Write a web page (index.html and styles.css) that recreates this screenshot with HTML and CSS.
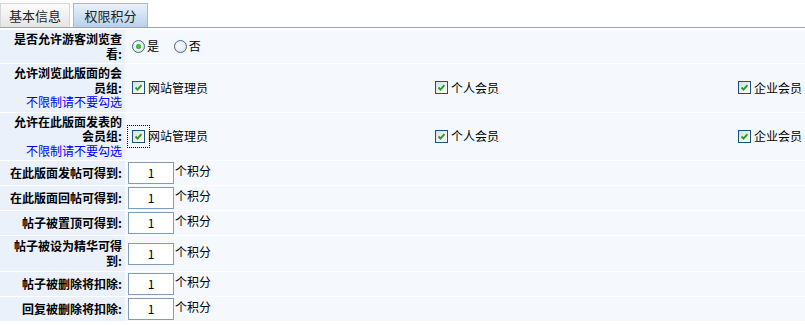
FILE: index.html
```html
<!DOCTYPE html>
<html lang="zh-CN">
<head>
    <meta charset="UTF-8">
    <title>版面设置</title>
    <link rel="stylesheet" href="styles.css">
</head>
<body>
    <div class="tabs">
        <span class="tab">基本信息</span>
        <span class="tab active">权限积分</span>
    </div>

    <table class="form">
        <tr>
            <td class="lbl">是否允许游客浏览查看:</td>
            <td class="val">
                <span class="radio on"></span><span class="opt-text">是</span>
                <span class="radio"></span><span class="opt-text">否</span>
            </td>
        </tr>
        <tr>
            <td class="lbl">允许浏览此版面的会员组:<br><span class="tip">不限制请不要勾选</span></td>
            <td class="val">
                <div class="groups">
                    <div class="grp"><span class="chk"><svg viewBox="0 0 13 13"><path d="M3 6.5 L5.3 9 L10 3.6" /></svg></span>网站管理员</div>
                    <div class="grp"><span class="chk"><svg viewBox="0 0 13 13"><path d="M3 6.5 L5.3 9 L10 3.6" /></svg></span>个人会员</div>
                    <div class="grp"><span class="chk"><svg viewBox="0 0 13 13"><path d="M3 6.5 L5.3 9 L10 3.6" /></svg></span>企业会员</div>
                </div>
            </td>
        </tr>
        <tr>
            <td class="lbl">允许在此版面发表的会员组:<br><span class="tip">不限制请不要勾选</span></td>
            <td class="val">
                <div class="groups">
                    <div class="grp"><span class="chk focus"><svg viewBox="0 0 13 13"><path d="M3 6.5 L5.3 9 L10 3.6" /></svg></span>网站管理员</div>
                    <div class="grp"><span class="chk"><svg viewBox="0 0 13 13"><path d="M3 6.5 L5.3 9 L10 3.6" /></svg></span>个人会员</div>
                    <div class="grp"><span class="chk"><svg viewBox="0 0 13 13"><path d="M3 6.5 L5.3 9 L10 3.6" /></svg></span>企业会员</div>
                </div>
            </td>
        </tr>
        <tr class="short">
            <td class="lbl">在此版面发帖可得到:</td>
            <td class="val"><span class="num">1</span>个积分</td>
        </tr>
        <tr class="short">
            <td class="lbl">在此版面回帖可得到:</td>
            <td class="val"><span class="num">1</span>个积分</td>
        </tr>
        <tr class="short">
            <td class="lbl">帖子被置顶可得到:</td>
            <td class="val"><span class="num">1</span>个积分</td>
        </tr>
        <tr class="tall">
            <td class="lbl">帖子被设为精华可得到:</td>
            <td class="val"><span class="num">1</span>个积分</td>
        </tr>
        <tr class="short">
            <td class="lbl">帖子被删除将扣除:</td>
            <td class="val"><span class="num">1</span>个积分</td>
        </tr>
        <tr class="short">
            <td class="lbl">回复被删除将扣除:</td>
            <td class="val"><span class="num">1</span>个积分</td>
        </tr>
    </table>
</body>
</html>
```

FILE: styles.css
```css
body {
    margin: 0;
    font-family: "Noto Sans CJK SC", "DejaVu Sans", sans-serif;
    font-size: 12px;
    color: #000;
    background-color: #fff;
    overflow: hidden;
}

.tabs {
    display: flex;
    gap: 3px;
    padding-top: 3px;
    border-bottom: 1px solid #9ca4ab;
    margin-bottom: 2px;
}

.tab {
    display: flex;
    align-items: center;
    justify-content: center;
    height: 23px;
    width: 68px;
    border: 1px solid #d6d6d6;
    border-bottom: none;
    background: linear-gradient(#fbfbfb, #e5e5e5);
    color: #222;
    font-size: 13px;
}

.tab.active {
    width: 73px;
    border-color: #9dbbdf;
    background: linear-gradient(#e9f1fb, #b9d1ee);
}

.form {
    border-collapse: collapse;
    width: 100%;
    table-layout: fixed;
}

.form td {
    border-bottom: 1px solid #fff;
    padding: 2px 3px;
    line-height: 14.5px;
    vertical-align: middle;
}

.form tr.short td {
    height: 22px;
    padding-top: 1px;
    padding-bottom: 1px;
}

.form tr.tall td {
    padding-top: 3px;
    padding-bottom: 3px;
}

.lbl {
    width: 119px;
    text-align: right;
    font-weight: bold;
    background-color: #eaf1fb;
}

.val {
    background-color: #f5f9fe;
    white-space: nowrap;
    overflow: visible;
}

.tip {
    color: #0000ff;
    font-weight: normal;
}

.radio {
    display: inline-block;
    vertical-align: -2px;
    width: 11px;
    height: 11px;
    border: 1px solid #3c6a96;
    border-radius: 50%;
    background: radial-gradient(circle at 40% 40%, #ffffff, #d9dde2);
    position: relative;
    margin-left: 4px;
}

.radio.on::after {
    content: "";
    position: absolute;
    left: 3px;
    top: 3px;
    width: 5px;
    height: 5px;
    border-radius: 50%;
    background: radial-gradient(circle, #4ccf4c, #1f9a1f);
}

.opt-text {
    margin: 0 8px 0 2px;
}

.groups {
    display: flex;
    margin-left: 4px;
}

.grp {
    display: flex;
    align-items: center;
    width: 303px;
    flex-shrink: 0;
}

.chk {
    display: inline-block;
    width: 11px;
    height: 11px;
    border: 1px solid #1c5180;
    background: linear-gradient(135deg, #dcdcd7, #ffffff);
    margin-right: 3px;
}

.chk svg {
    display: block;
    width: 11px;
    height: 11px;
}

.chk path {
    fill: none;
    stroke: #21a121;
    stroke-width: 2.2;
}

.chk.focus {
    outline: 1px dotted #000;
    outline-offset: 4px;
}

.num {
    display: inline-block;
    vertical-align: middle;
    box-sizing: border-box;
    width: 46px;
    height: 22px;
    line-height: 20px;
    border: 1px solid #7f9db9;
    background-color: #fff;
    text-align: center;
    margin-right: 1px;
}
```
